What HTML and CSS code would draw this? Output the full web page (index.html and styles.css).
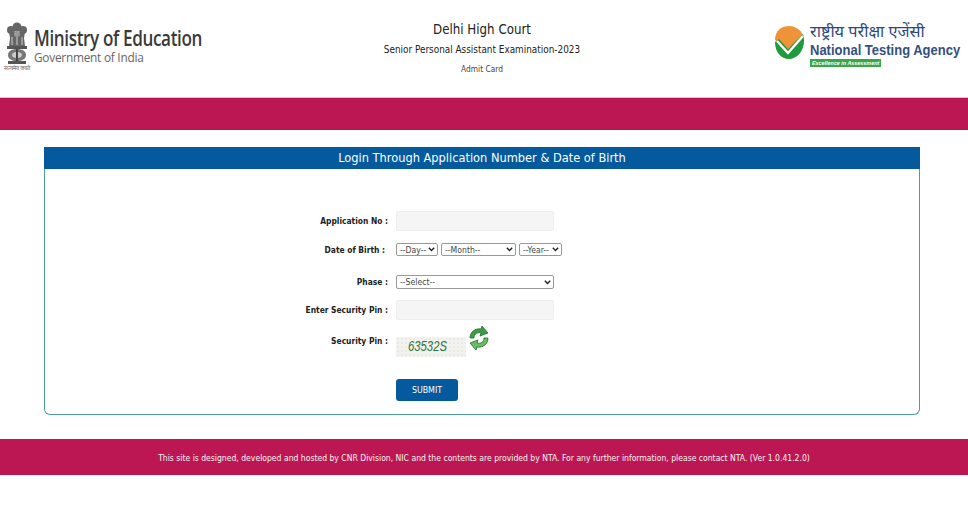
FILE: index.html
```html
<!DOCTYPE html>
<html lang="en">
<head>
    <meta charset="UTF-8">
    <title>Admit Card</title>
    <link rel="stylesheet" href="styles.css">
</head>
<body>
    <header class="top">
        <div class="moe">
            <div class="emblem">
                <svg width="24" height="43" viewBox="0 0 24 43">
                    <g fill="#666">
                        <circle cx="12" cy="5" r="4.5"/>
                        <circle cx="6" cy="8" r="4"/>
                        <circle cx="18" cy="8" r="4"/>
                        <path d="M4 10h16l-1 6 1 8H4l1-8z"/>
                    </g>
                    <g fill="#999">
                        <circle cx="12" cy="12" r="3"/>
                        <rect x="6" y="15" width="2" height="8"/>
                        <rect x="11" y="15" width="2" height="8"/>
                        <rect x="16" y="15" width="2" height="8"/>
                    </g>
                    <rect x="2" y="24" width="20" height="3" fill="#555"/>
                    <path d="M3 33c0-4 4-6 9-6s9 2 9 6-4 6-9 6-9-2-9-6z" fill="#777"/>
                    <path d="M7 33c0-2 2-3 5-3s5 1 5 3-2 3-5 3-5-1-5-3z" fill="#ccc"/>
                    <rect x="11" y="27" width="2" height="12" fill="#444"/>
                    <rect x="3" y="39" width="18" height="3" fill="#555"/>
                </svg>
                <span class="motto">सत्यमेव जयते</span>
            </div>
            <div class="moe-text">
                <div class="moe-name">Ministry of Education</div>
                <div class="moe-sub">Government of India</div>
            </div>
        </div>
        <div class="exam">
            <div class="exam-court">Delhi High Court</div>
            <div class="exam-name">Senior Personal Assistant Examination-2023</div>
            <div class="exam-card">Admit Card</div>
        </div>
        <div class="nta">
            <svg class="nta-mark" width="30" height="35" viewBox="0 0 30 35">
                <path d="M1 15C1 6 7 1 15 1c8 0 14 6 14 11L14 24z" fill="#ee9338"/>
                <path d="M1 17l4-3 9 10L29 9c1 2 1 5 1 7 0 10-7 18-15 18C7 34 1 27 1 17z" fill="#1f9a3c"/>
                <path d="M3 16l11 12L29 11" fill="none" stroke="#fff" stroke-width="2.5"/>
            </svg>
            <div class="nta-text">
                <div class="nta-hindi">राष्ट्रीय परीक्षा एजेंसी</div>
                <div class="nta-name">National Testing Agency</div>
                <div class="nta-tag">Excellence in Assessment</div>
            </div>
        </div>
    </header>

    <div class="band"></div>

    <section class="panel">
        <h1>Login Through Application Number &amp; Date of Birth</h1>
        <form class="login">
            <div class="row row-app">
                <label>Application No :</label>
                <input class="field" type="text">
            </div>
            <div class="row row-dob">
                <label class="nudge">Date of Birth :</label>
                <div class="dob">
                    <select class="sel-day"><option>--Day--</option></select>
                    <select class="sel-month"><option>--Month--</option></select>
                    <select class="sel-year"><option>--Year--</option></select>
                </div>
            </div>
            <div class="row row-phase">
                <label>Phase :</label>
                <select class="sel-phase"><option>--Select--</option></select>
            </div>
            <div class="row row-pin">
                <label>Enter Security Pin :</label>
                <input class="field" type="text">
            </div>
            <div class="row row-captcha">
                <label class="captcha-label">Security Pin :</label>
                <div class="captcha-wrap">
                    <div class="captcha"><span>63532S</span></div>
                    <svg class="refresh" width="22" height="26" viewBox="0 0 22 26">
                        <path d="M2 13C2 7 7 3 13 4l1-3 6 7-8 3 1-3C9 7 6 9 6 13z" fill="#3f9a45" stroke="#1f6e2e" stroke-width=".8"/>
                        <path d="M20 13c0 6-5 10-11 9l-1 3-6-7 8-3-1 3c4 1 7-1 7-5z" fill="#67bd62" stroke="#1f6e2e" stroke-width=".8"/>
                    </svg>
                </div>
            </div>
            <div class="row row-submit">
                <span></span>
                <button type="button">SUBMIT</button>
            </div>
        </form>
    </section>

    <footer class="bottom">
        This site is designed, developed and hosted by CNR Division, NIC and the contents are provided by NTA. For any further information, please contact NTA. (Ver 1.0.41.2.0)
    </footer>
</body>
</html>
```

FILE: styles.css
```css
:root {
    --rose: #bc1753;
    --blue: #045a9c;
    --teal: #4f9d97;
    --text: #222;
}

* {
    margin: 0;
    padding: 0;
    box-sizing: border-box;
}

body {
    font-family: "DejaVu Sans Condensed", "DejaVu Sans", sans-serif;
    background-color: #fff;
    color: var(--text);
}

/* header */
.top {
    height: 98px;
    display: grid;
    grid-template-columns: 240px 1fr 244px;
    border-bottom: 1px solid #ccc;
}

.moe {
    display: flex;
    padding: 22px 0 0 2px;
}

.emblem {
    width: 30px;
    flex-shrink: 0;
    display: flex;
    flex-direction: column;
    align-items: center;
}

.motto {
    font-size: 5.5px;
    line-height: 7px;
    color: #555;
    white-space: nowrap;
}

.moe-text {
    margin-left: 2px;
    padding-top: 4px;
}

.moe-name {
    font-family: "Open Sans", sans-serif;
    font-size: 21px;
    line-height: 24px;
    font-weight: 600;
    color: #3a3a3a;
    letter-spacing: -0.45px;
    white-space: nowrap;
    transform: scaleX(0.815);
    transform-origin: left;
}

.moe-sub {
    font-family: "Open Sans", sans-serif;
    font-size: 13.5px;
    line-height: 15px;
    color: #666;
    letter-spacing: -0.3px;
    white-space: nowrap;
    transform: scaleX(0.88);
    transform-origin: left;
}

.exam {
    text-align: center;
    padding-top: 20px;
}

.exam-court {
    font-size: 13.2px;
    line-height: 20px;
    color: #222;
}

.exam-name {
    font-size: 9.9px;
    line-height: 14px;
    margin-top: 3px;
    color: #222;
}

.exam-card {
    font-size: 8.3px;
    line-height: 12px;
    margin-top: 6px;
    color: #444;
}

.nta {
    display: flex;
    padding: 25px 0 0 50px;
}

.nta-mark {
    flex-shrink: 0;
}

.nta-text {
    margin-left: 6px;
    margin-top: -4px;
}

.nta-hindi {
    font-family: "Noto Sans", sans-serif;
    font-size: 16.3px;
    line-height: 20px;
    color: #2d4a7d;
    white-space: nowrap;
}

.nta-name {
    font-family: "Liberation Sans", sans-serif;
    font-size: 15.5px;
    line-height: 18px;
    font-weight: 700;
    color: #33507f;
    white-space: nowrap;
    transform: scaleX(0.838);
    transform-origin: left;
}

.nta-tag {
    width: 71px;
    height: 8px;
    padding-left: 2px;
    background-color: #3aa648;
    color: #fff;
    font-family: "Liberation Sans", sans-serif;
    font-size: 5.4px;
    line-height: 8px;
    font-style: italic;
    font-weight: 700;
    white-space: nowrap;
}

.band {
    height: 32px;
    background-color: var(--rose);
}

/* login panel */
.panel {
    height: 268px;
    margin: 17px 48px 0 44px;
    border: 1px solid var(--teal);
    border-top: 0;
    border-radius: 0 0 6px 6px;
}

.panel h1 {
    height: 22px;
    margin: 0 -1px;
    background-color: var(--blue);
    color: #fff;
    font-size: 12.7px;
    line-height: 22px;
    font-weight: 400;
    text-align: center;
}

.login {
    padding-top: 42px;
}

.row {
    display: grid;
    grid-template-columns: 343px 1fr;
    column-gap: 8px;
    align-items: center;
}

.row label {
    font-size: 8.4px;
    font-weight: 700;
    text-align: right;
    color: #222;
}

.row .nudge {
    padding-right: 3px;
}

.field {
    display: block;
    width: 158px;
    height: 20px;
    background-color: #f5f5f5;
    border: 1px solid #eee;
    border-radius: 2px;
}

select {
    appearance: none;
    font-family: "DejaVu Sans Condensed", "DejaVu Sans", sans-serif;
    font-size: 8.6px;
    height: 13px;
    padding-left: 3px;
    color: #444;
    background: #fff url("data:image/svg+xml,%3Csvg xmlns='http://www.w3.org/2000/svg' width='7' height='5'%3E%3Cpath d='M.8.8l2.7 2.8L6.2.8' fill='none' stroke='%23222' stroke-width='1.4'/%3E%3C/svg%3E") no-repeat right 2px center;
    border: 1px solid #999;
    border-radius: 2px;
}

.dob {
    display: flex;
    gap: 3px;
}

.sel-day { width: 42px; }
.sel-month { width: 75px; }
.sel-year { width: 43px; }
.sel-phase { width: 158px; height: 14px; }

.row-dob { margin-top: 12px; }
.row-phase { margin-top: 19px; }
.row-pin { margin-top: 11px; }
.row-captcha { margin-top: 6px; align-items: start; }

.row .captcha-label {
    padding-top: 10px;
}

.captcha-wrap {
    display: flex;
    align-items: flex-start;
}

.captcha {
    width: 70px;
    height: 20px;
    margin-top: 11px;
    padding-left: 12px;
    background-color: #f2f2ee;
    background-image: radial-gradient(#ebebe6 1px, transparent 1px);
    background-size: 4px 4px;
    color: #2f7443;
    font-family: "Liberation Sans", sans-serif;
    font-size: 14.5px;
    line-height: 18px;
    font-style: italic;
}

.captcha span {
    display: inline-block;
    transform: scaleX(0.78);
    transform-origin: left;
}

.refresh {
    margin-left: 2px;
    margin-top: -1px;
}

.row-submit {
    margin-top: 22px;
}

button {
    width: 62px;
    height: 22px;
    background-color: var(--blue);
    color: #fff;
    border: none;
    border-radius: 3px;
    font-family: "DejaVu Sans Condensed", "DejaVu Sans", sans-serif;
    font-size: 8.8px;
}

.bottom {
    height: 36px;
    margin-top: 24px;
    padding-top: 1px;
    background-color: var(--rose);
    color: #f4f4f4;
    font-size: 8.55px;
    line-height: 36px;
    text-align: center;
}
```
